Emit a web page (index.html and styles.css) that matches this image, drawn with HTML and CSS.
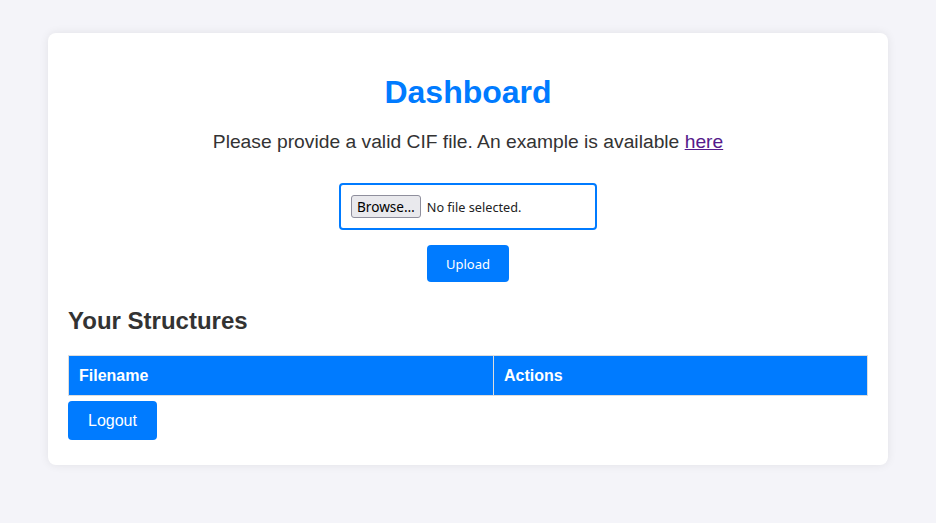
FILE: index.html
```html
<!DOCTYPE html>
<html lang="en">
<head>
    <meta charset="UTF-8">
    <meta name="viewport" content="width=device-width, initial-scale=1.0">
    <title>Dashboard</title>
    <link rel="stylesheet" href="styles.css">
</head>
<body>
    <div class="container">
        <h1>Dashboard</h1>
        <p class="intro">Please provide a valid CIF file. An example is available <a href="#" class="visited">here</a></p>

        <form class="upload-form" onsubmit="return false;">
            <div class="file-box">
                <span class="file-button">Browse…</span>
                <span class="file-label">No file selected.</span>
            </div>
            <button type="submit" class="upload-button">Upload</button>
        </form>

        <h2>Your Structures</h2>
        <table class="structures">
            <thead>
                <tr>
                    <th class="col-name">Filename</th>
                    <th>Actions</th>
                </tr>
            </thead>
            <tbody></tbody>
        </table>
        <button class="logout-button">Logout</button>
    </div>
</body>
</html>
```

FILE: styles.css
```css
body {
    margin: 0;
    padding: 33px 0;
    font-family: 'Liberation Sans', Arial, sans-serif;
    background-color: #f4f4f9;
    color: #333;
}
.container {
    width: 800px;
    margin: 0 auto;
    padding: 20px;
    background-color: #fff;
    border-radius: 8px;
    box-shadow: 0 0 10px rgba(0, 0, 0, 0.08);
}
h1 {
    margin: 21px 0;
    font-size: 32px;
    line-height: 37px;
    text-align: center;
    color: #007bff;
}
.intro {
    margin: 0 0 30px;
    font-size: 19.25px;
    line-height: 20px;
    padding-bottom: 1px;
    text-align: center;
}
.intro a.visited {
    color: #551a8b;
}
.upload-form {
    display: flex;
    flex-direction: column;
    align-items: center;
    gap: 15px;
}
.file-box {
    display: flex;
    align-items: center;
    gap: 6px;
    width: 234px;
    height: 23px;
    padding: 10px;
    border: 2px solid #007bff;
    border-radius: 4px;
    font-family: 'Noto Sans', sans-serif;
    font-size: 12.7px;
    color: #222;
}
.file-button {
    padding: 0 5px;
    border: 1px solid #8f8f9d;
    border-radius: 3px;
    background-color: #e9e9ed;
    color: #000;
    font-size: 13.6px;
    line-height: 21px;
}
.upload-button {
    padding: 11px 19px 9px;
    border: none;
    border-radius: 4px;
    background-color: #007bff;
    color: #fff;
    font-family: 'Noto Sans', sans-serif;
    font-size: 13px;
    line-height: 17px;
    cursor: pointer;
}
h2 {
    margin: 25px 0 20px;
    font-size: 24px;
    line-height: 28px;
}
.structures {
    width: 100%;
    border-collapse: collapse;
}
.structures th {
    padding: 10px;
    border: 1px solid #ddd;
    background-color: #007bff;
    color: #fff;
    font-size: 16px;
    line-height: 19px;
    text-align: left;
}
.structures .col-name {
    width: 53.2%;
}
.logout-button {
    margin: 5px 0;
    padding: 10px 20px;
    border: none;
    border-radius: 4px;
    background-color: #007bff;
    color: #fff;
    font-family: 'Liberation Sans', Arial, sans-serif;
    font-size: 16px;
    line-height: 19px;
    cursor: pointer;
}
```
